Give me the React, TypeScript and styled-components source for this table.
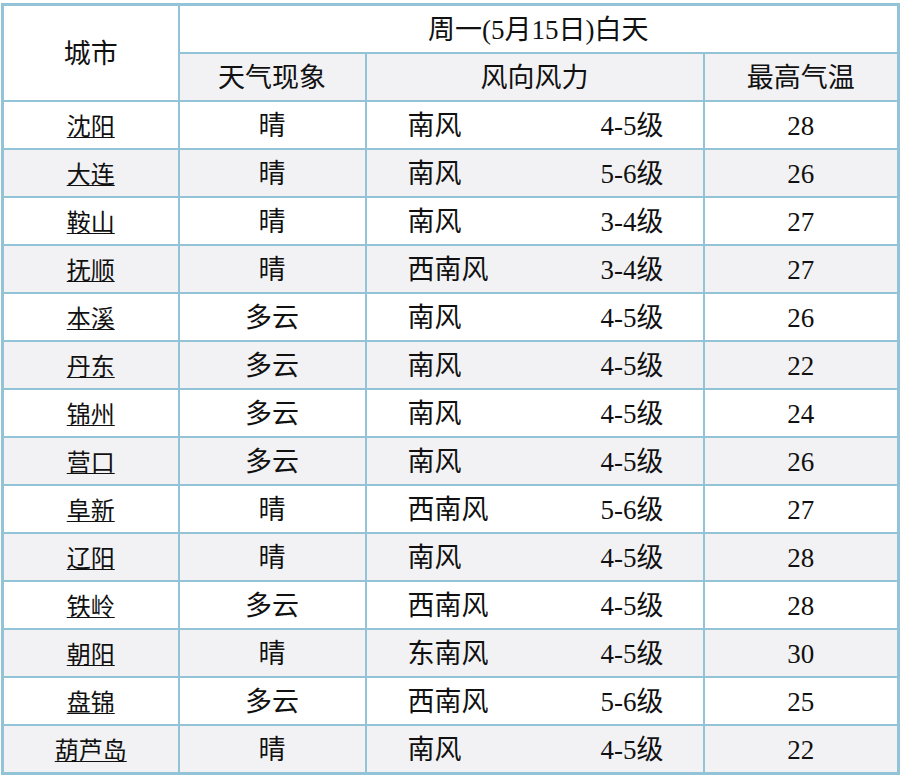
import React from "react";
import styled, { createGlobalStyle } from "styled-components";

interface CityForecast {
  city: string;
  weather: string;
  windDir: string;
  windLevel: string;
  high: number;
}

const forecasts: CityForecast[] = [
  { city: "沈阳", weather: "晴", windDir: "南风", windLevel: "4-5级", high: 28 },
  { city: "大连", weather: "晴", windDir: "南风", windLevel: "5-6级", high: 26 },
  { city: "鞍山", weather: "晴", windDir: "南风", windLevel: "3-4级", high: 27 },
  { city: "抚顺", weather: "晴", windDir: "西南风", windLevel: "3-4级", high: 27 },
  { city: "本溪", weather: "多云", windDir: "南风", windLevel: "4-5级", high: 26 },
  { city: "丹东", weather: "多云", windDir: "南风", windLevel: "4-5级", high: 22 },
  { city: "锦州", weather: "多云", windDir: "南风", windLevel: "4-5级", high: 24 },
  { city: "营口", weather: "多云", windDir: "南风", windLevel: "4-5级", high: 26 },
  { city: "阜新", weather: "晴", windDir: "西南风", windLevel: "5-6级", high: 27 },
  { city: "辽阳", weather: "晴", windDir: "南风", windLevel: "4-5级", high: 28 },
  { city: "铁岭", weather: "多云", windDir: "西南风", windLevel: "4-5级", high: 28 },
  { city: "朝阳", weather: "晴", windDir: "东南风", windLevel: "4-5级", high: 30 },
  { city: "盘锦", weather: "多云", windDir: "西南风", windLevel: "5-6级", high: 25 },
  { city: "葫芦岛", weather: "晴", windDir: "南风", windLevel: "4-5级", high: 22 },
];

const Colors = {
  border: "#93c3d6",
  stripe: "#f2f2f4",
  text: "#111111",
};

const GlobalStyle = createGlobalStyle`
  body {
    margin: 0;
    background: #ffffff;
    font-family: "Liberation Serif", "Noto Sans CJK SC", serif;
    color: ${Colors.text};
  }
`;

export default function App() {
  return (
    <>
      <GlobalStyle />
      <Page>
        <ForecastTable>
          <colgroup>
            <col style={{ width: 176 }} />
            <col style={{ width: 187 }} />
            <col style={{ width: 338 }} />
            <col style={{ width: 195 }} />
          </colgroup>
          <thead>
            <tr>
              <HeadCell rowSpan={2}>城市</HeadCell>
              <HeadCell colSpan={3}>周一(5月15日)白天</HeadCell>
            </tr>
            <tr>
              <HeadCell $shaded>天气现象</HeadCell>
              <HeadCell $shaded>风向风力</HeadCell>
              <HeadCell $shaded>最高气温</HeadCell>
            </tr>
          </thead>
          <tbody>
            {forecasts.map((f, i) => (
              <Row key={f.city} $striped={i % 2 === 1}>
                <Cell>
                  <CityLink href="#">{f.city}</CityLink>
                </Cell>
                <Cell>{f.weather}</Cell>
                <Cell>
                  <Wind>
                    <span>{f.windDir}</span>
                    <span>{f.windLevel}</span>
                  </Wind>
                </Cell>
                <Cell>{f.high}</Cell>
              </Row>
            ))}
          </tbody>
        </ForecastTable>
      </Page>
    </>
  );
}

const Page = styled.div`
  padding: 3px 0 0 1px;
`;

const ForecastTable = styled.table`
  border-collapse: collapse;
  table-layout: fixed;
  width: 898px;
  border: 3px solid ${Colors.border};
  font-size: 27px;
  line-height: 1.2;
`;

const HeadCell = styled.th<{ $shaded?: boolean }>`
  height: 44px;
  padding: 2px 0 0;
  border: 2px solid ${Colors.border};
  font-weight: normal;
  text-align: center;
  vertical-align: middle;
  background: ${({ $shaded }) => ($shaded ? Colors.stripe : "#ffffff")};
`;

const Row = styled.tr<{ $striped: boolean }>`
  background: ${({ $striped }) => ($striped ? Colors.stripe : "#ffffff")};
`;

const Cell = styled.td`
  height: 44px;
  padding: 2px 0 0;
  border: 2px solid ${Colors.border};
  text-align: center;
  vertical-align: middle;
`;

const CityLink = styled.a`
  color: ${Colors.text};
  font-size: 24px;
  text-decoration: underline;
  text-underline-offset: 2px;
  text-decoration-thickness: 1px;
`;

const Wind = styled.div`
  display: flex;
  justify-content: space-between;
  padding: 0 39px 0 41px;
`;
